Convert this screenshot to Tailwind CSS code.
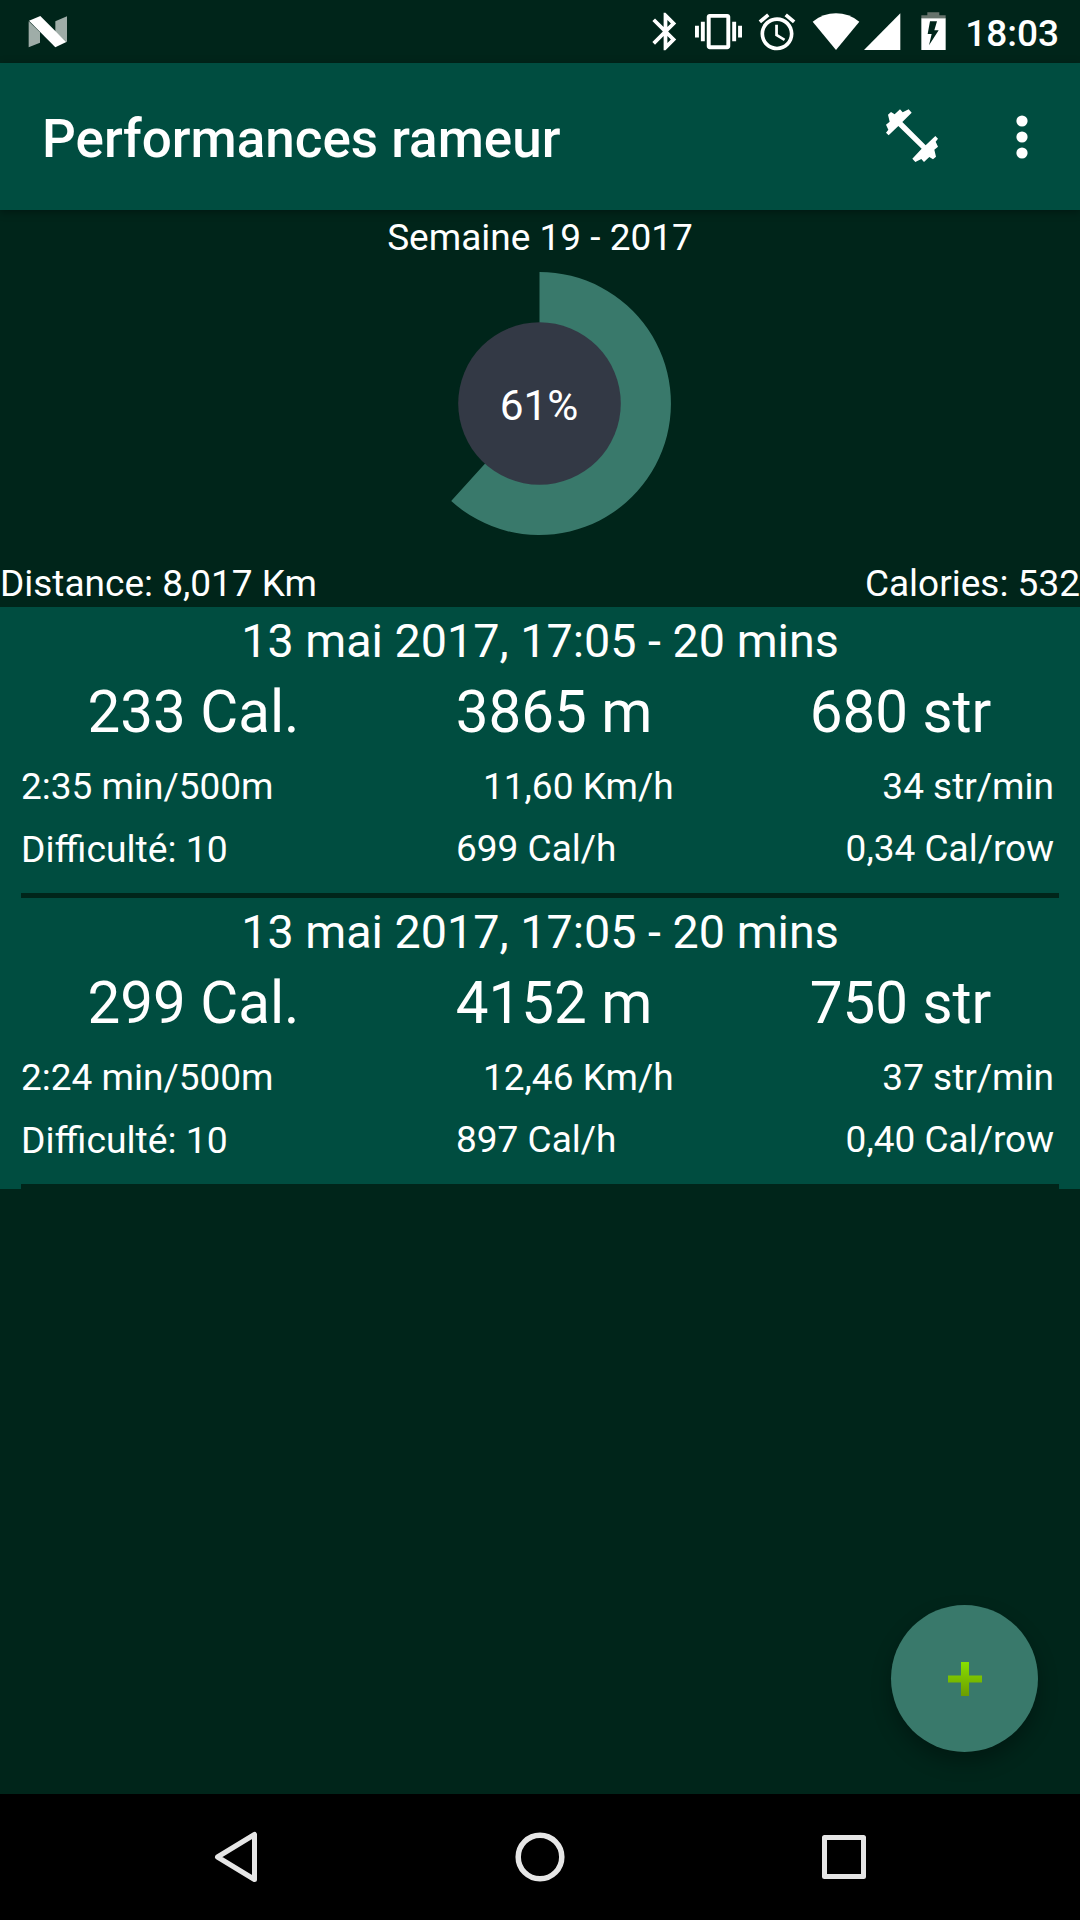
<!DOCTYPE html>
<html lang="fr">
<head>
  <meta charset="UTF-8" />
  <meta name="viewport" content="width=device-width, initial-scale=1.0"/>
  <title>Performances rameur</title>
  <script src="https://cdn.jsdelivr.net/npm/@tailwindcss/browser@4"></script>
</head>
<body class="bg-[#00251a] text-white font-[Roboto,sans-serif] text-[37px] w-[1080px] h-[1920px] flex flex-col overflow-hidden">

  <!-- Status bar -->
  <div class="h-[63px] shrink-0 flex items-center pl-[28px] pr-[21px]">
    <svg class="w-[40px] h-[32px]" viewBox="84 47 120 96">
      <path fill="#9fada8" d="M86 63l34 33v31l-34 14zM166 63l35-15v78l-35-32z"/>
      <path fill="#fff" d="M87 61l34-14 78 78-33 16z"/>
    </svg>
    <div class="ml-auto flex items-center">
      <svg class="w-[45px] h-[45px]" viewBox="0 0 24 24" fill="#fff"><path d="M17.71 7.71L12 2h-1v7.59L6.41 5 5 6.41 10.59 12 5 17.59 6.41 19 11 14.41V22h1l5.71-5.71-4.3-4.29 4.3-4.29zM13 5.83l1.88 1.88L13 9.59V5.83zm1.88 10.46L13 18.17v-3.76l1.88 1.88z"/></svg>
      <svg class="w-[47px] h-[47px] ml-[7px]" viewBox="0 0 24 24" fill="#fff"><path d="M0 15h2V9H0v6zm3 2h2V7H3v10zm19-8v6h2V9h-2zm-3 8h2V7h-2v10zM16.5 3h-9C6.67 3 6 3.67 6 4.5v15c0 .83.67 1.5 1.5 1.5h9c.83 0 1.5-.67 1.5-1.5v-15c0-.83-.67-1.5-1.5-1.5zM16 19H8V5h8v14z"/></svg>
      <svg class="w-[44px] h-[44px] ml-[13px]" viewBox="0 0 24 24" fill="#fff"><path d="M22 5.72l-4.6-3.86-1.29 1.53 4.6 3.86L22 5.72zM7.88 3.39L6.6 1.86 2 5.71l1.29 1.53 4.59-3.85zM12.5 8H11v6l4.75 2.85.75-1.23-4-2.37V8zM12 4c-4.97 0-9 4.03-9 9s4.02 9 9 9c4.97 0 9-4.03 9-9s-4.03-9-9-9zm0 16c-3.87 0-7-3.13-7-7s3.13-7 7-7 7 3.13 7 7-3.13 7-7 7z"/></svg>
      <svg class="w-[48px] h-[38px] ml-[13px]" viewBox="516 37 144 114" fill="#fff"><path d="M588 148L518 63Q550 38 588 38T658 63z"/></svg>
      <svg class="w-[37px] h-[38px] ml-[4px]" viewBox="672 37 111 114" fill="#fff"><path d="M672 148L781 38V148z"/></svg>
      <svg class="w-[25px] h-[39px] ml-[20px]" viewBox="845 36 75 117"><path fill="#66736c" d="M864 37h36v9h19v10h-73V46h18z"/><path fill="#fff" d="M846 55h73v95h-73z"/><path fill="#00251a" d="M872 64h21l-8 27h13l-29 45 8-34h-12z"/></svg>
      <span class="ml-[19px] pt-[3px] font-medium leading-none">18:03</span>
    </div>
  </div>

  <!-- App bar -->
  <header class="relative z-10 h-[147px] shrink-0 bg-[#004d40] flex items-center pl-[42px] pr-[52px] shadow-[0_2px_8px_rgba(0,0,0,0.35)]">
    <h1 class="text-[53px] font-medium leading-none pt-[5px]">Performances rameur</h1>
    <svg class="w-[54px] h-[54px] ml-auto -mt-[2px]" viewBox="74 56 162 162" fill="#fff">
      <path d="M85 135L77 127 84 118 77 103 88 94 83 73 92 65 103 72 119 57 127 66 145 57 154 67 126 95 196 165 225 137 233 145 226 154 233 169 222 178 227 199 218 207 207 200 191 215 183 206 165 215 156 205 184 175 114 107z"/>
    </svg>
    <svg class="w-[12px] h-[44px] ml-[77px]" viewBox="0 0 12 44" fill="#fff">
      <circle cx="6" cy="6" r="5.6"/><circle cx="6" cy="22" r="5.6"/><circle cx="6" cy="38" r="5.6"/>
    </svg>
  </header>

  <!-- Weekly summary -->
  <section class="h-[397px] shrink-0 flex flex-col">
    <p class="text-center leading-[55px]">Semaine 19 - 2017</p>
    <svg class="w-[270px] h-[295px] shrink-0 mx-auto" viewBox="405.5 265 270 295">
      <path fill="#39796b" d="M540 403.5V272A131.5 131.5 0 1 1 451.7 501z"/>
      <circle cx="540" cy="403.5" r="81.3" fill="#333945"/>
      <text x="539.5" y="420" text-anchor="middle" font-size="42.4" fill="#fff">61%</text>
    </svg>
    <div class="flex justify-between leading-[47px]">
      <span>Distance: 8,017 Km</span>
      <span>Calories: 532</span>
    </div>
  </section>

  <!-- Sessions -->
  <main class="flex-grow">
    <article class="bg-[#004d40] px-[21px]">
      <p class="text-center text-[46.7px] leading-[68px]">13 mai 2017, 17:05 - 20 mins</p>
      <div class="grid grid-cols-[345px_376px_317px] text-center text-[58.3px] leading-[75px]">
        <span>233 Cal.</span><span>3865 m</span><span>680 str</span>
      </div>
      <div class="grid grid-cols-[345px_376px_317px] leading-[74px]">
        <span>2:35 min/500m</span><span class="pl-[117px]">11,60 Km/h</span><span class="text-right pr-[5px]">34 str/min</span>
      </div>
      <div class="grid grid-cols-[345px_376px_317px] leading-[50px] pb-[19px]">
        <span class="text-[37.3px]">Difficulté: 10</span><span class="pl-[90px]">699 Cal/h</span><span class="text-right pr-[5px]">0,34 Cal/row</span>
      </div>
      <div class="h-[5px] bg-[#00251a]"></div>
    </article>

    <article class="bg-[#004d40] px-[21px]">
      <p class="text-center text-[46.7px] leading-[68px]">13 mai 2017, 17:05 - 20 mins</p>
      <div class="grid grid-cols-[345px_376px_317px] text-center text-[58.3px] leading-[75px]">
        <span>299 Cal.</span><span>4152 m</span><span>750 str</span>
      </div>
      <div class="grid grid-cols-[345px_376px_317px] leading-[74px]">
        <span>2:24 min/500m</span><span class="pl-[117px]">12,46 Km/h</span><span class="text-right pr-[5px]">37 str/min</span>
      </div>
      <div class="grid grid-cols-[345px_376px_317px] leading-[50px] pb-[19px]">
        <span class="text-[37.3px]">Difficulté: 10</span><span class="pl-[90px]">897 Cal/h</span><span class="text-right pr-[5px]">0,40 Cal/row</span>
      </div>
      <div class="h-[5px] bg-[#00251a]"></div>
    </article>
  </main>

  <!-- Add button -->
  <button class="absolute left-[891px] top-[1605px] size-[147px] rounded-full bg-[#39796b] flex items-center justify-center shadow-[0_10px_20px_rgba(0,0,0,0.3)]">
    <svg class="size-[36px]" viewBox="0 0 36 36">
      <defs>
        <linearGradient id="plus" x1="0" y1="0" x2="0" y2="1">
          <stop offset="0" stop-color="#88e000"/><stop offset="1" stop-color="#6c9c00"/>
        </linearGradient>
      </defs>
      <path fill="url(#plus)" d="M14 1h8v13.5h13v7H22V35h-8V21.5H1v-7h13z"/>
    </svg>
  </button>

  <!-- Navigation bar -->
  <nav class="h-[126px] shrink-0 bg-black grid grid-cols-3 items-center justify-items-center px-[84px]">
    <svg class="size-[52px] ml-[6px]" viewBox="0 0 52 52" fill="none" stroke="#e6e6e6" stroke-width="5" stroke-linejoin="round"><path d="M41.5 3.5v45L4.500 26z"/></svg>
    <svg class="size-[52px]" viewBox="0 0 52 52" fill="none" stroke="#e6e6e6" stroke-width="5.5"><circle cx="26" cy="26" r="21.8"/></svg>
    <svg class="size-[46px]" viewBox="0 0 46 46" fill="none" stroke="#e6e6e6" stroke-width="5" stroke-linejoin="round"><path d="M3.5 3.5h39v39h-39z"/></svg>
  </nav>

</body>
</html>
